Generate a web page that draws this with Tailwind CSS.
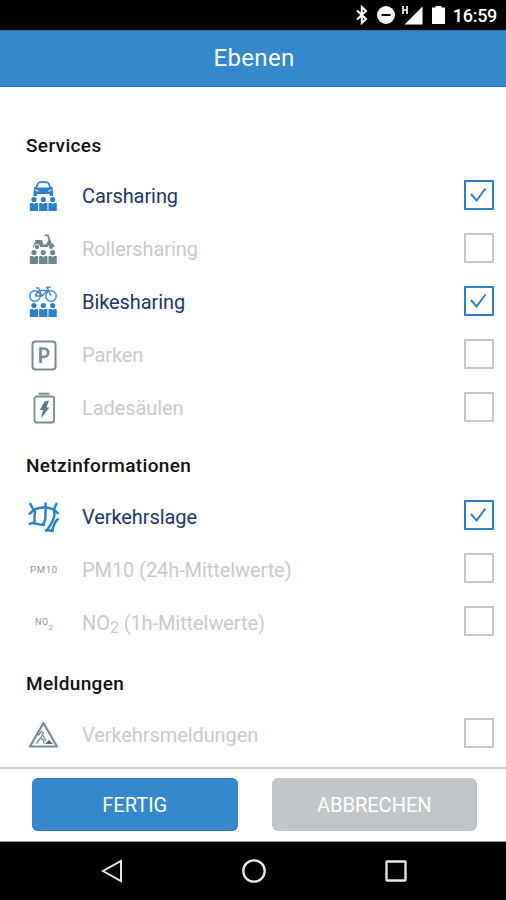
<!DOCTYPE html>
<html lang="de">
<head>
<meta charset="utf-8">
<title>Ebenen</title>
<script src="https://cdn.jsdelivr.net/npm/@tailwindcss/browser@4"></script>
</head>
<body class="bg-white">
<svg class="hidden">
  <defs>
    <g id="people">
      <g id="person"><circle cx="5" cy="18.500" r="2.600"/><path d="M.8 23q0-1 1-1h2l1.200 1.300L6.200 22h2q1 0 1 1v7H.8z"/></g>
      <use href="#person" x="9.300"/><use href="#person" x="18.600"/>
    </g>
  </defs>
</svg>
<div class="flex h-[900px] w-[506px] flex-col overflow-hidden font-['Roboto',sans-serif]">
  <div class="flex h-[30px] shrink-0 items-center justify-end bg-black pr-[9px] text-white">
    <svg class="mr-[8px] h-[20px] w-[14px]" viewBox="0 0 14 20" fill="none" stroke="#fff" stroke-width="2"><path d="M2 5.500l9 8.500-4.200 4V2L11 6 2 14.500"/></svg>
    <svg class="mr-[7px] h-[20px] w-[18px]" viewBox="0 0 18 20"><circle cx="9" cy="10" r="9" fill="#fff"/><path d="M4.500 10h9" stroke="#000" stroke-width="2"/></svg>
    <svg class="mr-[9px] h-[20px] w-[21px]" viewBox="0 0 21 20"><path d="M20.500 1.500v18H2.500z" fill="#fff"/><path d="M1 1v8M5 1v8M1 5h4" stroke="#fff" stroke-width="1.600"/></svg>
    <svg class="mr-[8px] h-[20px] w-[13px]" viewBox="0 0 13 20"><path d="M3.500 1h6v1.500H13V19H0V2.500h3.500z" fill="#fff"/></svg>
    <span class="mt-[2px] text-[18px] font-medium leading-none tracking-[-0.300px]">16:59</span>
  </div>
  <header class="flex h-[57px] shrink-0 items-center justify-center border-y border-t-[#1976b8] border-b-[#1976b8] bg-[#3488cb] pb-[2px] pl-[2px] text-[24px] tracking-[0.350px] text-white">Ebenen</header>

  <main class="flex h-[680px] shrink-0 flex-col pl-[26px] pr-[12px] text-[20px] tracking-[-0.080px] text-[#c8cacb]">
    <h2 class="flex h-[83px] items-end pb-[10px] text-[19px] font-medium tracking-[0.350px] text-[#111]">Services</h2>

    <div class="flex h-[53px] shrink-0 items-center text-[#223763]">
      <svg class="h-[34px] w-[34px]" viewBox="-3 -1 34 34" fill="#2c80c8"><path d="M8 2.500Q8.500 0 14.300 0t6.300 2.500L22 6h1.700v1.500H23q1.200 1 1.200 3V15h-3.500v-2H8v2H4.500v-4.500q0-2 1.200-3H5V6h1.600zM9.700 2.500L8.300 6.500h12L18.900 2.500Q14.300 1 9.700 2.500z" fill-rule="evenodd"/><path d="M6.300 9l3 1.200M22.300 9l-3 1.200" stroke="#fff" stroke-width="1.200"/><use href="#people"/></svg>
      <span class="mb-px ml-[22px] flex-1">Carsharing</span>
      <svg class="mb-[4px] h-[30px] w-[30px]" viewBox="0 0 30 30" fill="none" stroke="#2c7ec8" stroke-width="2"><path d="M1 1h28v28H1z"/><path d="M7 14l5.500 6.500L21.500 8.500"/></svg>
    </div>
    <div class="flex h-[53px] shrink-0 items-center">
      <svg class="h-[34px] w-[34px]" viewBox="-3 -1 34 34" fill="#6d8790"><path d="M6 6h7l1.500 4.500H17L19.500 6 18 2h-2.500V.5h4L22.500 9q3 .8 3 4h-2a2.500 2.500 0 0 0-4-1l-1.500 1H11a3 3 0 0 0-6 0H4q0-3.500 3-5L6 7.500z"/><circle cx="8" cy="13" r="2.200"/><circle cx="22" cy="13" r="2"/><use href="#people"/></svg>
      <span class="mb-[2px] ml-[22px] flex-1">Rollersharing</span>
      <svg class="mb-[4px] h-[30px] w-[30px]" viewBox="0 0 30 30" fill="none" stroke="#c3c7c8" stroke-width="2"><path d="M1 1h28v28H1z"/></svg>
    </div>
    <div class="flex h-[53px] shrink-0 items-center text-[#223763]">
      <svg class="h-[34px] w-[34px]" viewBox="-3 -1 34 34" fill="#2c80c8"><g fill="none" stroke="#3b8acc" stroke-width="1.400"><circle cx="6" cy="9" r="5.300"/><circle cx="22" cy="9" r="5.300"/><path d="M6 9L10 3.500h8.500L13 9H6M13 9L9.500 1H7M22 9L18 .2h3.500"/></g><use href="#people"/></svg>
      <span class="mb-[2px] ml-[22px] flex-1">Bikesharing</span>
      <svg class="mb-[4px] h-[30px] w-[30px]" viewBox="0 0 30 30" fill="none" stroke="#2c7ec8" stroke-width="2"><path d="M1 1h28v28H1z"/><path d="M7 14l5.500 6.500L21.500 8.500"/></svg>
    </div>
    <div class="flex h-[53px] shrink-0 items-center">
      <svg class="h-[34px] w-[34px]" viewBox="0 0 34 34" fill="none" stroke="#738c95"><rect x="6.500" y="2.500" width="23" height="28" rx="3" stroke-width="2"/><path d="M14.500 24V9.500h3.500a4.200 4.200 0 0 1 0 8.400h-3.500" stroke-width="2.700"/></svg>
      <span class="mb-[2px] ml-[22px] flex-1">Parken</span>
      <svg class="mb-[4px] h-[30px] w-[30px]" viewBox="0 0 30 30" fill="none" stroke="#c3c7c8" stroke-width="2"><path d="M1 1h28v28H1z"/></svg>
    </div>
    <div class="flex h-[53px] shrink-0 items-center">
      <svg class="h-[34px] w-[34px]" viewBox="0 0 34 34" fill="none" stroke="#738c95" stroke-width="1.800"><rect x="8.500" y="4.500" width="19.500" height="26" rx="2"/><path d="M12.500 1.700h11" stroke-width="2"/><path d="M18.500 9.500l4.500-1-2.500 7h2.800L15 26.500l2-8.500h-3.200z" fill="#5f7b88" stroke="none"/></svg>
      <span class="mb-[2px] ml-[22px] flex-1">Ladesäulen</span>
      <svg class="mb-[4px] h-[30px] w-[30px]" viewBox="0 0 30 30" fill="none" stroke="#c3c7c8" stroke-width="2"><path d="M1 1h28v28H1z"/></svg>
    </div>

    <h2 class="flex h-[55px] items-end pb-[10px] text-[19px] font-medium tracking-[0.350px] text-[#111]">Netzinformationen</h2>

    <div class="flex h-[53px] shrink-0 items-center text-[#223763]">
      <svg class="h-[34px] w-[34px]" viewBox="0 0 34 34" fill="none" stroke="#2581c8" stroke-width="2.400"><path d="M4 3q2 5 5 8.500Q8 18 9 25M3 14.500Q8 7.500 18 7.500T32.500 14M3 24.500q3-2.500 7-1t9 1.500M19.500 2.500v13q0 6-3 9.500M31 3q-4 6-2.500 11Q29 19 20.500 31M32.500 18.500q-3.500 3-4.500 6.500T25 32M19 30.500h9"/></svg>
      <span class="ml-[22px] flex-1">Verkehrslage</span>
      <svg class="mb-[4px] h-[30px] w-[30px]" viewBox="0 0 30 30" fill="none" stroke="#2c7ec8" stroke-width="2"><path d="M1 1h28v28H1z"/><path d="M7 14l5.500 6.500L21.500 8.500"/></svg>
    </div>
    <div class="flex h-[53px] shrink-0 items-center">
      <span class="w-[34px] pl-[4px] pt-[2px] text-[9.500px] tracking-[0.700px] text-[#84979e]">PM10</span>
      <span class="ml-[22px] flex-1">PM10 (24h-Mittelwerte)</span>
      <svg class="mb-[4px] h-[30px] w-[30px]" viewBox="0 0 30 30" fill="none" stroke="#c3c7c8" stroke-width="2"><path d="M1 1h28v28H1z"/></svg>
    </div>
    <div class="flex h-[53px] shrink-0 items-center">
      <span class="flex w-[34px] items-end pb-[2px] pl-[9px] text-[9px] leading-[12px] tracking-[0.500px] text-[#84979e]">NO<span class="-mb-[6px] text-[7px]">2</span></span>
      <span class="ml-[22px] flex-1">NO<sub class="bottom-[-0.200em] text-[16px]">2</sub> (1h-Mittelwerte)</span>
      <svg class="mb-[4px] h-[30px] w-[30px]" viewBox="0 0 30 30" fill="none" stroke="#c3c7c8" stroke-width="2"><path d="M1 1h28v28H1z"/></svg>
    </div>

    <h2 class="flex h-[59px] items-end pb-[10px] text-[19px] font-medium tracking-[0.350px] text-[#111]">Meldungen</h2>

    <div class="flex h-[53px] shrink-0 items-center">
      <svg class="h-[34px] w-[34px]" viewBox="0 0 34 34" fill="none" stroke="#738c95" stroke-width="2.200" stroke-linejoin="round"><path d="M17.500 5L31 28.500H4z"/><path d="M15 13l2.500 2-3 5-4 5.500M14.500 20l3 2 .5 3.500M12 17.500l3-3.500M16 16l4 7" stroke-width="1.300"/><path d="M19 26l4-4 4 4z" fill="#526f7b" stroke="none"/></svg>
      <span class="ml-[22px] flex-1">Verkehrsmeldungen</span>
      <svg class="mb-[4px] h-[30px] w-[30px]" viewBox="0 0 30 30" fill="none" stroke="#c3c7c8" stroke-width="2"><path d="M1 1h28v28H1z"/></svg>
    </div>
  </main>

  <footer class="flex h-[75px] shrink-0 gap-[34px] border-t-2 border-b border-t-[#cfcfcf] border-b-[#999] pl-[32px] pr-[29px] pt-[9px] text-[20px] text-white">
    <button class="h-[53px] w-[206px] rounded-[6px] border-y border-[#1c79c2] bg-[#3488cb]">FERTIG</button>
    <button class="h-[53px] w-[206px] rounded-[6px] bg-[#bfc5c8]">ABBRECHEN</button>
  </footer>
  <nav class="flex h-[58px] shrink-0 items-center bg-black pl-[101px]">
    <svg class="h-[26px] w-[22px]" viewBox="0 0 22 26" fill="none" stroke="#e8e8e8" stroke-width="2"><path d="M20 3v20L2 13z"/></svg>
    <svg class="ml-[118px] h-[26px] w-[26px]" viewBox="0 0 26 26" fill="none" stroke="#e8e8e8" stroke-width="2.300"><circle cx="13" cy="13" r="10.700"/></svg>
    <svg class="ml-[118px] h-[26px] w-[22px]" viewBox="0 0 22 26" fill="none" stroke="#e8e8e8" stroke-width="2.300"><rect x="1.500" y="3.500" width="19" height="19" rx=".5"/></svg>
  </nav>
</div>
</body>
</html>
